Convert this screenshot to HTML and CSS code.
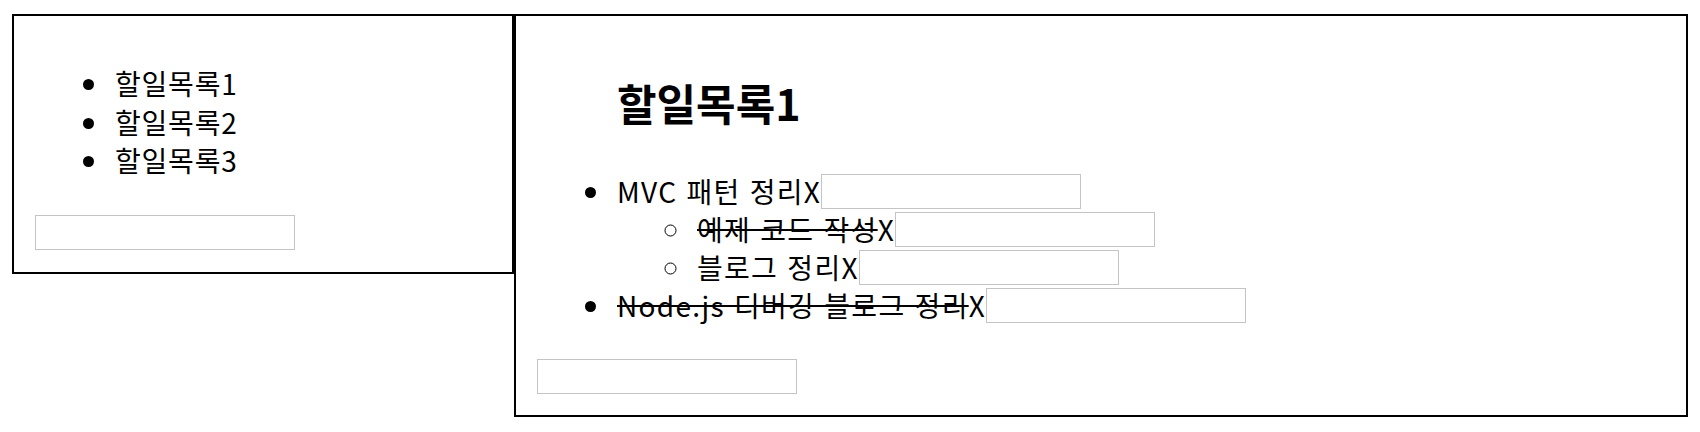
FILE: index.html
```html
<!DOCTYPE html>
<html lang="ko">
<head>
    <meta charset="UTF-8">
    <meta name="viewport" content="width=device-width, initial-scale=1.0">
    <title>할일목록</title>
    <link rel="stylesheet" href="styles.css">
</head>
<body>
    <div class="panel sidebar">
        <ul class="list">
            <li>할일목록1</li>
            <li>할일목록2</li>
            <li>할일목록3</li>
        </ul>
        <input type="text" class="field">
    </div>
    <div class="panel detail">
        <h1 class="title">할일목록1</h1>
        <ul class="list todo">
            <li>
                <span>MVC 패턴 정리</span><span class="del">X</span><input type="text" class="field">
                <ul class="sub">
                    <li><span class="done">예제 코드 작성</span><span class="del">X</span><input type="text" class="field"></li>
                    <li><span>블로그 정리</span><span class="del">X</span><input type="text" class="field"></li>
                </ul>
            </li>
            <li><span class="done">Node.js 디버깅 블로그 정리</span><span class="del">X</span><input type="text" class="field"></li>
        </ul>
        <input type="text" class="field">
    </div>
</body>
</html>
```

FILE: styles.css
```css
body {
    display: flex;
    align-items: flex-start;
    margin: 14px 12px;
    font-family: "Noto Sans CJK KR", "Noto Sans", sans-serif;
    font-size: 28px;
    letter-spacing: 0.8px;
    color: #000;
    background: #fff;
}
.panel {
    box-sizing: border-box;
    border: 2px solid #000;
    padding: 0 21px 22px;
}
.sidebar {
    width: 502px;
}
.detail {
    flex: 1;
    padding-bottom: 21px;
}
.list {
    margin: 48px 0 35px;
    padding-left: 76px;
}
.list li {
    line-height: 38.5px;
    padding-left: 4px;
}
.todo {
    margin-top: 39px;
    letter-spacing: 1.3px;
}
.todo li {
    line-height: 38px;
}
.sub {
    margin: 0;
    padding-left: 76px;
    list-style-type: circle;
}
.title {
    margin: 55px 0 0 80px;
    font-size: 43px;
    line-height: 62px;
    font-weight: bold;
    letter-spacing: 0;
}
.done {
    text-decoration: line-through;
}
.field {
    box-sizing: border-box;
    width: 260px;
    height: 35px;
    margin: 2px 0 0;
    padding: 0 4px;
    border: 1px solid #c4c4c4;
    font: inherit;
    font-size: 16px;
    vertical-align: top;
    display: inline-block;
}
.panel > .field {
    display: block;
    margin: 0;
}
```
